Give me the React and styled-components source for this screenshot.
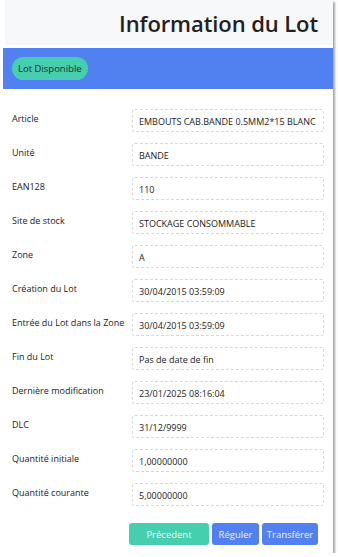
import React from "react";
import styled, { createGlobalStyle } from "styled-components";

const Global = createGlobalStyle`
  body {
    margin: 0;
    background: #ffffff;
    font-family: "Open Sans", "Noto Sans", sans-serif;
  }
`;

const Card = styled.div`
  width: 333px;
  height: 553px;
  background: #fff;
  box-shadow: 2px 2px 2px rgba(0, 0, 0, 0.35);
  display: flex;
  flex-direction: column;
  box-sizing: border-box;
`;

const Header = styled.div`
  height: 45px;
  margin-left: 5px;
  background: #f7f8fa;
  display: flex;
  align-items: center;
  justify-content: flex-end;
  padding-right: 15px;
`;

const Title = styled.h1`
  margin: 0;
  font-size: 22px;
  font-weight: 600;
  color: #222;
  letter-spacing: -0.1px;
`;

const Band = styled.div`
  margin: 3px 0 0 3px;
  height: 41px;
  background: #5181f0;
  display: flex;
  align-items: center;
  padding-left: 9px;
`;

const Pill = styled.span`
  background: #45cfae;
  color: #1d2a2a;
  font-size: 9.5px;
  padding: 5px 6px;
  border-radius: 12px;
`;

const Form = styled.div`
  padding: 20px 9px 0 12px;
  display: flex;
  flex-direction: column;
  gap: 11px;
`;

const Row = styled.div`
  display: grid;
  grid-template-columns: 120px 1fr;
  align-items: start;
`;

const Label = styled.label`
  font-size: 9px;
  color: #222;
  padding-top: 3px;
`;

const Value = styled.div`
  height: 23px;
  box-sizing: border-box;
  border: 1px dashed #d8d8d8;
  border-radius: 3px;
  font-size: 9px;
  color: #222;
  display: flex;
  align-items: center;
  padding: 2px 6px 0;
  white-space: nowrap;
  overflow: hidden;
`;

const Actions = styled.div`
  display: flex;
  justify-content: flex-end;
  gap: 3px;
  padding: 17px 15px 0 0;
`;

const Button = styled.button`
  height: 22px;
  border: none;
  border-radius: 3px;
  background: ${(p) => (p.$variant === "teal" ? "#45cfae" : "#5181f0")};
  color: #eef3ff;
  font-family: inherit;
  font-size: 9.5px;
  width: ${(p) => p.$w}px;
  padding: 0;
`;

const fields = [
  ["Article", "EMBOUTS CAB.BANDE 0.5MM2*15 BLANC"],
  ["Unité", "BANDE"],
  ["EAN128", "110"],
  ["Site de stock", "STOCKAGE CONSOMMABLE"],
  ["Zone", "A"],
  ["Création du Lot", "30/04/2015 03:59:09"],
  ["Entrée du Lot dans la Zone", "30/04/2015 03:59:09"],
  ["Fin du Lot", "Pas de date de fin"],
  ["Dernière modification", "23/01/2025 08:16:04"],
  ["DLC", "31/12/9999"],
  ["Quantité initiale", "1,00000000"],
  ["Quantité courante", "5,00000000"],
];

export default function App() {
  return (
    <>
      <Global />
      <Card>
        <Header>
          <Title>Information du Lot</Title>
        </Header>
        <Band>
          <Pill>Lot Disponible</Pill>
        </Band>
        <Form>
          {fields.map(([label, value]) => (
            <Row key={label}>
              <Label>{label}</Label>
              <Value>{value}</Value>
            </Row>
          ))}
        </Form>
        <Actions>
          <Button $variant="teal" $w={80}>Précedent</Button>
          <Button $w={47}>Réguler</Button>
          <Button $w={56}>Transférer</Button>
        </Actions>
      </Card>
    </>
  );
}
